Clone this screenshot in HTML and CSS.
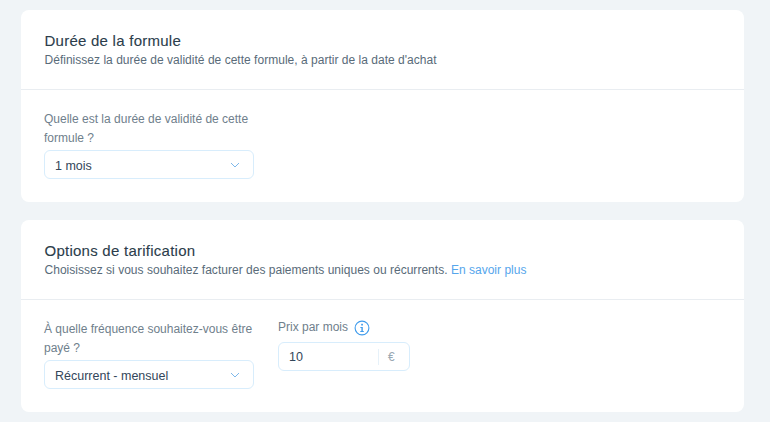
FILE: index.html
```html
<!DOCTYPE html>
<html lang="fr">
<head>
<meta charset="utf-8">
<title>Formule</title>
<link rel="stylesheet" href="styles.css">
</head>
<body>
<main class="page">
  <section class="card">
    <header class="card-head">
      <h2 class="title">Durée de la formule</h2>
      <p class="subtitle">Définissez la durée de validité de cette formule, à partir de la date d'achat</p>
    </header>
    <div class="card-body">
      <div class="field">
        <label class="label">Quelle est la durée de validité de cette formule ?</label>
        <div class="select"><span>1 mois</span>
          <svg class="chev" width="10" height="6" viewBox="0 0 10 6"><path d="M1 1l4 4 4-4" fill="none" stroke="#7fb8ea" stroke-width="1"/></svg>
        </div>
      </div>
    </div>
  </section>
  <section class="card">
    <header class="card-head">
      <h2 class="title">Options de tarification</h2>
      <p class="subtitle">Choisissez si vous souhaitez facturer des paiements uniques ou récurrents. <a class="link" href="#">En savoir plus</a></p>
    </header>
    <div class="card-body">
      <div class="field">
        <label class="label">À quelle fréquence souhaitez-vous être payé ?</label>
        <div class="select"><span>Récurrent - mensuel</span>
          <svg class="chev" width="10" height="6" viewBox="0 0 10 6"><path d="M1 1l4 4 4-4" fill="none" stroke="#7fb8ea" stroke-width="1"/></svg>
        </div>
      </div>
      <div class="field field-price">
        <label class="label label-info">Prix par mois
          <svg class="info" width="16" height="16" viewBox="0 0 16 16"><circle cx="8" cy="8" r="6.9" fill="none" stroke="#3f9bec" stroke-width="1.1"/><rect x="7.2" y="3.8" width="1.7" height="1.7" fill="#3f9bec"/><path d="M6.4 6.9h2.4v4.2h1v1H6.3v-1h1.1V7.9h-1z" fill="#3f9bec"/></svg>
        </label>
        <div class="input"><span class="value">10</span><span class="unit">€</span></div>
      </div>
    </div>
  </section>
</main>
</body>
</html>
```
FILE: styles.css
```css
* { box-sizing: border-box; }
html, body { margin: 0; height: 100%; }
body {
  background: #f0f4f7;
  font-family: "Liberation Sans", Arial, sans-serif;
  color: #162d3d;
  overflow: hidden;
}
.page {
  display: flex;
  flex-direction: column;
  gap: 18px;
  width: 723px;
  margin-left: 21px;
  padding-top: 10px;
}
.card {
  background: #fff;
  border-radius: 8px;
  height: 192px;
}
.card-head {
  height: 80px;
  padding: 22px 24px 0 23.5px;
  border-bottom: 1px solid #e9edf1;
}
.title {
  margin: 0;
  font-size: 15px;
  line-height: 18px;
  font-weight: 400;
  letter-spacing: 0.25px;
  color: #2b3d4b;
  -webkit-text-stroke: 0.1px #2b3d4b;
}
.subtitle {
  margin: 0;
  padding-top: 0.5px;
  font-size: 12px;
  line-height: 19px;
  color: #596b79;
  letter-spacing: 0.02px;
}
.link { color: #56a6ec; text-decoration: none; }
.card-body {
  display: flex;
  gap: 24px;
  padding: 20px 23px 0;
}
.field { width: 210px; }
.field-price { width: 132px; }
.label {
  display: block;
  font-size: 12px;
  line-height: 19px;
  color: #6f808c;
  margin-bottom: 2px;
}
.label-info {
  display: flex;
  align-items: center;
  gap: 6px;
  margin-top: -2px;
  margin-bottom: 4.5px;
}
.select, .input {
  display: flex;
  align-items: center;
  height: 29px;
  border: 1px solid #d8edfc;
  border-radius: 6px;
  font-size: 12.5px;
  color: #33465a;
  background: #fff;
  padding-top: 2px;
}
.select {
  justify-content: space-between;
  padding-left: 10px;
  padding-right: 13px;
}
.chev { display: block; margin-top: -1px; }
.input { padding-left: 10px; padding-right: 10px; }
.value { flex: 1; }
.unit {
  width: 22px;
  margin-right: -1px;
  border-left: 1px solid #e6f1f9;
  padding-left: 9px;
  line-height: 16px;
  font-size: 12px;
  color: #9aa8b3;
}
.info { display: block; }
```
